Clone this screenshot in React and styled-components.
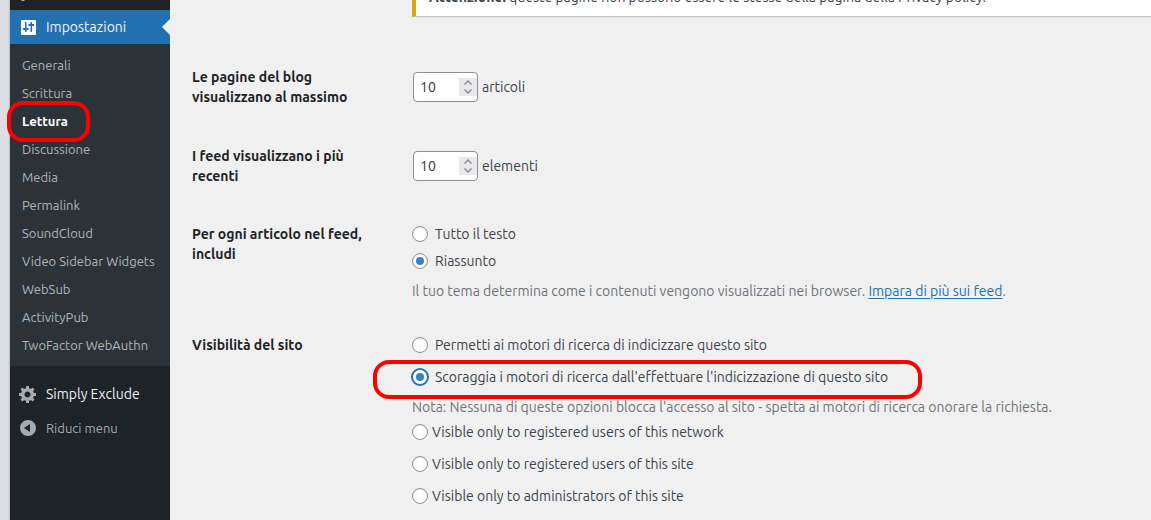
import styled, { createGlobalStyle } from 'styled-components';
import { useState } from 'react';

const GlobalStyle = createGlobalStyle`
    * {
        box-sizing: border-box;
    }

    body {
        margin: 0;
        background: #f0f0f0;
        color: #3c434a;
        font-family: Ubuntu, "Noto Sans", sans-serif;
        font-size: 14px;
        line-height: 20px;
    }
`;

const Page = styled.div`
    display: flex;
    height: 100vh;
    padding-left: 10px;
    overflow: hidden;
    background: #dcdfe5;
`;

const Sidebar = styled.nav`
    flex: 0 0 160px;
    background: #1d2327;
    box-shadow: 0 0 2px rgba(0, 0, 0, 0.4);
`;

const PreviousItem = styled.div`
    height: 10px;
    padding-left: 10px;
    overflow: hidden;

    svg {
        display: block;
        width: 5px;
        height: 2px;
        fill: #a7aaad;
    }
`;

const MenuLink = styled.a`
    position: relative;
    display: flex;
    align-items: center;
    gap: 8px;
    height: 34px;
    padding-left: 8px;
    background: ${({ $current }) => ($current ? '#2271b1' : 'transparent')};
    color: #f0f0f1;
    text-decoration: none;

    svg {
        width: 20px;
        height: 20px;
        fill: ${({ $current }) => ($current ? '#fff' : '#a7aaad')};
    }

    &::after {
        content: '';
        display: ${({ $current }) => ($current ? 'block' : 'none')};
        position: absolute;
        right: 0;
        top: 9px;
        border: 8px solid transparent;
        border-right-color: #f0f0f0;
        border-left: 0;
    }
`;

const CollapseButton = styled.button`
    display: flex;
    align-items: center;
    gap: 8px;
    width: 100%;
    height: 34px;
    padding: 0 0 0 8px;
    border: 0;
    background: none;
    color: #a7aaad;
    font: inherit;
    font-size: 13px;

    svg {
        width: 20px;
        height: 20px;
        fill: #a7aaad;
    }
`;

const Submenu = styled.ul`
    margin: 0 0 11px;
    padding: 7px 0;
    list-style: none;
    background: #2c3338;
`;

const SubmenuItem = styled.li`
    display: flex;
    align-items: center;
    height: 28px;
    padding-left: 12px;
`;

const SubmenuLink = styled.a`
    position: relative;
    color: ${({ $active }) => ($active ? '#fff' : '#b0b3b6')};
    font-size: 13px;
    font-weight: ${({ $active }) => ($active ? 600 : 400)};
    text-decoration: none;
`;

const Highlight = styled.span`
    position: absolute;
    inset: ${({ $inset }) => $inset};
    border: 4px solid #fe0000;
    border-radius: 16px;
    pointer-events: none;
`;

const Content = styled.main`
    flex: 1;
    min-width: 0;
    padding-left: 22px;
    background: #f0f0f0;
`;

const Notice = styled.div`
    height: 17px;
    margin-left: 220px;
    padding-left: 13px;
    border-left: 4px solid #dba617;
    border-bottom: 1px solid #c3c4c7;
    background: #fff;
    box-shadow: 0 1px 1px rgba(0, 0, 0, 0.04);
    overflow: hidden;

    p {
        margin: -13px 0 0;
    }

    strong {
        font-weight: 600;
    }
`;

const Form = styled.form`
    padding-top: 50px;
`;

const Row = styled.div`
    display: grid;
    grid-template-columns: 180px minmax(0, 1fr);
    column-gap: 40px;
    margin-bottom: ${({ $gap }) => $gap || 38}px;
`;

const RowTitle = styled.div`
    color: #1d2327;
    font-weight: 600;
`;

const NumberCell = styled.div`
    display: flex;
    align-items: center;
    align-self: start;
    gap: 4px;
    padding: 5px 0 0 1px;
`;

const NumberBox = styled.span`
    display: flex;
    align-items: center;
    width: 65px;
    height: 30px;
    border: 1px solid #8c8f94;
    border-radius: 4px;
    background: #fff;
    overflow: hidden;
`;

const NumberInput = styled.input`
    flex: 1;
    min-width: 0;
    padding: 0 0 0 6px;
    border: 0;
    outline: 0;
    background: none;
    color: #2c3338;
    font: inherit;
    appearance: textfield;

    &::-webkit-inner-spin-button {
        appearance: none;
        margin: 0;
    }
`;

const Stepper = styled.span`
    display: grid;
    grid-template-rows: 9px 9px;
    width: 18px;
    background: #e9e9ed;
`;

const StepButton = styled.button`
    display: flex;
    align-items: center;
    justify-content: center;
    padding: 0;
    border: 0;
    background: none;

    svg {
        width: 8px;
        height: 5px;
        fill: none;
        stroke: #8f8f9d;
        stroke-width: 1.5;
    }
`;

const RadioGroup = styled.div`
    display: grid;
    justify-items: start;
    row-gap: ${({ $gap }) => $gap}px;
`;

const RadioLabel = styled.label`
    position: relative;
    display: flex;
    align-items: center;
    gap: ${({ $close }) => ($close ? 4 : 7)}px;
`;

const Radio = styled.input`
    appearance: none;
    display: grid;
    place-items: center;
    width: 16px;
    height: 16px;
    margin: 0;
    border: 1px solid ${({ $focused }) => ($focused ? '#2271b1' : '#8c8f94')};
    border-radius: 50%;
    background: #fff;
    box-shadow: ${({ $focused }) => ($focused ? '0 0 0 1px #2271b1' : 'inset 0 1px 2px rgba(0, 0, 0, 0.1)')};

    &:checked::before {
        content: '';
        width: 8px;
        height: 8px;
        border-radius: 50%;
        background: #3582c4;
    }
`;

const Description = styled.p`
    margin: 10px 0 ${({ $after }) => $after || 0}px;
    color: #707479;

    a {
        color: #2271b1;
        text-underline-offset: 2px;
    }
`;

const submenu = [
    'Generali',
    'Scrittura',
    'Lettura',
    'Discussione',
    'Media',
    'Permalink',
    'SoundCloud',
    'Video Sidebar Widgets',
    'WebSub',
    'ActivityPub',
    'TwoFactor WebAuthn',
];

function SettingsIcon() {
    return (
        <svg viewBox="0 0 20 20" aria-hidden="true">
            <path
                fillRule="evenodd"
                d="M4 3h13q1 0 1 1v13q0 1-1 1H4q-1 0-1-1V4q0-1 1-1zM7 5v6H5v2h2v2h1.500v-2h2v-2h-2V5zM12.500 15V9h-2V7h2V5H14v2h2v2h-2v6z"
            />
        </svg>
    );
}

function GearIcon() {
    return (
        <svg viewBox="0 0 20 20" aria-hidden="true">
            <path d="M18 12h-2.180c-.170.700-.440 1.350-.810 1.930l1.540 1.540-2.100 2.100-1.540-1.540c-.580.360-1.230.630-1.910.790V19H8v-2.180c-.680-.160-1.330-.430-1.910-.790l-1.540 1.540-2.120-2.120 1.540-1.540c-.360-.580-.630-1.230-.790-1.910H1V9.030h2.170c.160-.700.440-1.350.800-1.940L2.430 5.550l2.100-2.100 1.540 1.540c.580-.370 1.240-.640 1.930-.810V2h3v2.180c.680.160 1.330.430 1.910.790l1.540-1.540 2.120 2.120-1.540 1.540c.360.590.640 1.240.800 1.940H18V12zm-8.500 1.500c1.660 0 3-1.340 3-3s-1.340-3-3-3-3 1.340-3 3 1.340 3 3 3z" />
        </svg>
    );
}

function CollapseIcon() {
    return (
        <svg viewBox="0 0 20 20" aria-hidden="true">
            <path fillRule="evenodd" d="M10 2a8 8 0 1 1 0 16 8 8 0 0 1 0-16zM12 14V6l-6 4z" />
        </svg>
    );
}

function NumberField({ id, label, unit }) {
    const [value, setValue] = useState(10);

    return (
        <NumberCell>
            <NumberBox>
                <NumberInput
                    id={id}
                    type="number"
                    aria-label={label}
                    value={value}
                    onChange={(e) => setValue(Number(e.target.value))}
                />
                <Stepper>
                    <StepButton type="button" aria-label="Aumenta" onClick={() => setValue(value + 1)}>
                        <svg viewBox="0 0 8 5"><path d="M.5 4.500 4 1l3.500 3.500" /></svg>
                    </StepButton>
                    <StepButton type="button" aria-label="Diminuisci" onClick={() => setValue(value - 1)}>
                        <svg viewBox="0 0 8 5"><path d="M.5.5 4 4 7.500.5" /></svg>
                    </StepButton>
                </Stepper>
            </NumberBox>
            <label htmlFor={id}>{unit}</label>
        </NumberCell>
    );
}

function RadioOption({ name, value, selected, onSelect, focused, close, children }) {
    return (
        <RadioLabel $close={close}>
            <Radio
                type="radio"
                name={name}
                checked={selected === value}
                onChange={() => onSelect(value)}
                $focused={focused}
            />
            {children}
        </RadioLabel>
    );
}

function App() {
    const [feed, setFeed] = useState('summary');
    const [visibility, setVisibility] = useState('discourage');
    const site = { name: 'visibility', selected: visibility, onSelect: setVisibility };

    return (
        <Page>
            <GlobalStyle />
            <Sidebar>
                <PreviousItem>
                    <svg viewBox="0 0 5 2" aria-hidden="true"><path d="M1 0h4L4 1H2z" /></svg>
                </PreviousItem>
                <MenuLink href="#impostazioni" $current>
                    <SettingsIcon />
                    Impostazioni
                </MenuLink>
                <Submenu>
                    {submenu.map((item) => (
                        <SubmenuItem key={item}>
                            <SubmenuLink href={`#${item}`} $active={item === 'Lettura'}>
                                {item}
                                {item === 'Lettura' && <Highlight $inset="-10px -22px -11px -15px" />}
                            </SubmenuLink>
                        </SubmenuItem>
                    ))}
                </Submenu>
                <MenuLink href="#simply-exclude">
                    <GearIcon />
                    Simply Exclude
                </MenuLink>
                <CollapseButton type="button">
                    <CollapseIcon />
                    Riduci menu
                </CollapseButton>
            </Sidebar>
            <Content>
                <Notice>
                    <p>
                        <strong>Attenzione:</strong> queste pagine non possono essere le stesse della pagina della Privacy policy.
                    </p>
                </Notice>
                <Form>
                    <Row $gap={39}>
                        <RowTitle>Le pagine del blog visualizzano al massimo</RowTitle>
                        <NumberField id="posts" label="Le pagine del blog visualizzano al massimo" unit="articoli" />
                    </Row>
                    <Row>
                        <RowTitle>I feed visualizzano i più recenti</RowTitle>
                        <NumberField id="feeds" label="I feed visualizzano i più recenti" unit="elementi" />
                    </Row>
                    <Row $gap={34}>
                        <RowTitle id="feed-title">Per ogni articolo nel feed, includi</RowTitle>
                        <div role="radiogroup" aria-labelledby="feed-title">
                            <RadioGroup $gap={7}>
                                <RadioOption name="feed" value="full" selected={feed} onSelect={setFeed}>
                                    Tutto il testo
                                </RadioOption>
                                <RadioOption name="feed" value="summary" selected={feed} onSelect={setFeed}>
                                    Riassunto
                                </RadioOption>
                            </RadioGroup>
                            <Description>
                                Il tuo tema determina come i contenuti vengono visualizzati nei browser.{' '}
                                <a href="#feed">Impara di più sui feed</a>.
                            </Description>
                        </div>
                    </Row>
                    <Row>
                        <RowTitle id="visibility-title">Visibilità del sito</RowTitle>
                        <div role="radiogroup" aria-labelledby="visibility-title">
                            <RadioGroup $gap={12}>
                                <RadioOption value="allow" {...site}>
                                    Permetti ai motori di ricerca di indicizzare questo sito
                                </RadioOption>
                                <RadioOption value="discourage" focused {...site}>
                                    Scoraggia i motori di ricerca dall'effettuare l'indicizzazione di questo sito
                                    <Highlight $inset="-7px -34px -12px -39px" />
                                </RadioOption>
                            </RadioGroup>
                            <Description $after={5}>
                                Nota: Nessuna di queste opzioni blocca l'accesso al sito - spetta ai motori di ricerca onorare la richiesta.
                            </Description>
                            <RadioGroup $gap={12}>
                                <RadioOption value="network" close {...site}>
                                    Visible only to registered users of this network
                                </RadioOption>
                                <RadioOption value="site" close {...site}>
                                    Visible only to registered users of this site
                                </RadioOption>
                                <RadioOption value="admins" close {...site}>
                                    Visible only to administrators of this site
                                </RadioOption>
                            </RadioGroup>
                        </div>
                    </Row>
                </Form>
            </Content>
        </Page>
    );
}

export default App;
